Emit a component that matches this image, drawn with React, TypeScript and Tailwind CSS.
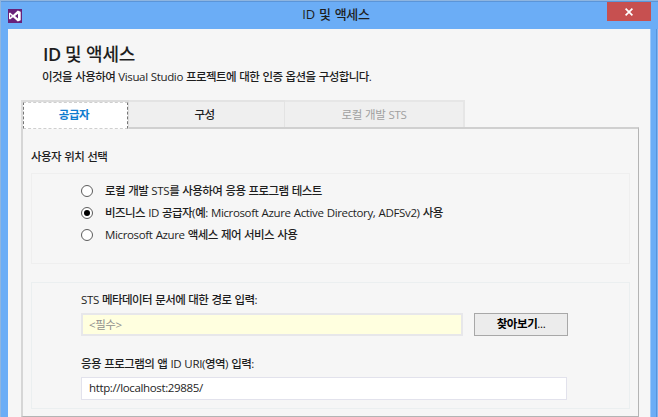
import React from "react";

const korean = /[\u3131-\uD7A3]/;

type MixedProps = { text: string; className?: string; latin?: string; hangul?: string };

// Hangul runs are set slightly heavier and tighter than the Latin runs beside them.
function Mixed({
  text,
  className = "text-[11.5px]",
  latin = "tracking-[-0.36px] [word-spacing:0.5px]",
  hangul = "font-medium tracking-[-0.58px]",
}: MixedProps) {
  const runs = text.match(/[\u3131-\uD7A3]+|[^\u3131-\uD7A3]+/g) ?? [];
  return (
    <span className={`block whitespace-pre ${className}`}>
      {runs.map((run, i) => (
        <span key={i} className={korean.test(run) ? hangul : latin}>
          {run}
        </span>
      ))}
    </span>
  );
}

function Radio({ checked = false }: { checked?: boolean }) {
  return (
    <span className="flex size-3 shrink-0 items-center justify-center rounded-full border border-[#5c5c5c] bg-white">
      {checked && <span className="size-1.5 rounded-full bg-black" />}
    </span>
  );
}

function Option({ text, checked }: { text: string; checked?: boolean }) {
  return (
    <div className="flex h-[22px] items-center gap-3">
      <Radio checked={checked} />
      <Mixed text={text} />
    </div>
  );
}

export default function App() {
  return (
    <div className="flex h-[417px] w-[658px] flex-col overflow-hidden border-t border-l border-[#8fb5df] bg-[#6badf6] font-['Open_Sans','Noto_Sans_CJK_KR',sans-serif] text-[12px] leading-[18px] text-[#1e1e1e]">
      <header className="grid h-7 shrink-0 grid-cols-[1fr_auto_1fr] border-t border-[#5b95d8]">
        <svg className="mt-[7px] ml-[7px]" width="14" height="14" viewBox="0 0 14 14">
          <path fill="#68217a" d="M0 0h14v14H0z" />
          <path fill="#fff" fillRule="evenodd" d="M1 4.2 2 3.5 5 6 9.8 1.5 12.7 2.7v8.6L9.8 12.5 5 8.3 2 10.5 1 9.8ZM2.2 5.4v3.2L3.8 7ZM10 4.7 7 7l3 2.4Z" />
        </svg>
        <Mixed
          text="ID 및 액세스"
          className="pt-[3px] pl-[13px] text-[13px]"
          latin="tracking-[-0.2px] [word-spacing:0.8px]"
          hangul="font-medium tracking-[-0.3px]"
        />
        <div className="mr-[7px] flex h-[19px] w-11 items-center justify-center justify-self-end bg-[#c75050]">
          <svg className="mt-px" width="8" height="8" viewBox="0 0 8 8" fill="none" stroke="#fff" strokeWidth="1.7">
            <path d="m.6.6 6.8 6.8M7.4.6.6 7.4" />
          </svg>
        </div>
      </header>
      <div className="flex min-h-0 flex-1">
        <div className="ml-[7px] flex w-[642px] flex-col bg-[#f6f6f6] pl-[13px]">
          <h1 className="mt-[12px] ml-[22px] leading-[26px] font-semibold">
            <Mixed
              text="ID 및 액세스"
              className="text-[18px]"
              latin="tracking-[-0.6px] [word-spacing:0.5px]"
              hangul="font-medium tracking-[-0.2px]"
            />
          </h1>
          <Mixed
            text="이것을 사용하여 Visual Studio 프로젝트에 대한 인증 옵션을 구성합니다."
            className="mt-px ml-[21px] text-[11.5px]"
          />
          <nav className="mt-[14px] flex h-7 shrink-0 items-stretch border-l border-[#dcdcdc]">
            <div className="relative -mb-px flex w-[107px] border-t-2 border-r border-l border-[#dcdcdc] bg-white">
              <div className="flex flex-1 items-center justify-center border border-dashed border-x-[#777] border-y-[#cfcfcf] pr-[3px] pb-[2px] text-[#0e7ccf]">
                <Mixed text="공급자" hangul="font-bold tracking-[-0.4px]" />
              </div>
            </div>
            <div className="flex w-[156px] items-center justify-center border-t-2 border-r border-[#e3e3e3] bg-[#efefef] pr-[4px] pb-px">
              <Mixed text="구성" />
            </div>
            <div className="flex w-[180px] items-center justify-center border-t-2 border-r-2 border-[#e6e6e6] bg-[#efefef] pb-px text-[#a0a0a0]">
              <Mixed text="로컬 개발 STS" hangul="tracking-[-0.43px]" />
            </div>
          </nav>
          <main className="-mt-px flex h-[290px] w-[618px] flex-col border-t-2 border-r border-b border-l-2 border-t-[#d0d0d0] border-r-[#b4b4b4] border-b-[#b4b4b4] border-l-[#d6d6d6] pl-2">
            <Mixed text="사용자 위치 선택" className="mt-[19px] text-[11.5px]" />
            <section className="mt-[7px] flex h-[91px] w-[599px] flex-col border border-[#efefef] pt-[6px] pl-[49px]">
              <Option text="로컬 개발 STS를 사용하여 응용 프로그램 테스트" />
              <Option text="비즈니스 ID 공급자(예: Microsoft Azure Active Directory, ADFSv2) 사용" checked />
              <Option text="Microsoft Azure 액세스 제어 서비스 사용" />
            </section>
            <section className="mt-[18px] flex h-[127px] w-[599px] flex-col border border-[#ebeff0] pl-[49px]">
              <Mixed text="STS 메타데이터 문서에 대한 경로 입력:" className="mt-2 text-[11.5px]" />
              <div className="mt-1 flex items-center gap-[11px]">
                <div className="flex h-[23px] w-[382px] items-center border-2 border-[#e7e7ea] bg-[#ffffdf] pl-[6px] text-[#8f8f8c]">
                  <Mixed text="<필수>" hangul="tracking-[-0.43px]" />
                </div>
                <button className="flex h-[23px] w-[94px] items-center justify-center border border-[#a8a8a8] bg-[#ececec] pb-px text-black">
                  <Mixed text="찾아보기..." hangul="font-bold tracking-[-0.43px]" />
                </button>
              </div>
              <Mixed text="응용 프로그램의 앱 ID URI(영역) 입력:" className="mt-[19px] text-[11.5px]" />
              <div className="mt-1 flex h-[23px] w-[486px] items-center border border-[#e2e2ec] bg-white pb-px pl-[7px]">
                <Mixed text="http://localhost:29885/" />
              </div>
            </section>
          </main>
        </div>
        <div className="flex-1 border-l border-[#9cc8f8]" />
        <div className="w-px bg-[#5794dc]" />
        <div className="w-px bg-[#83b6ee]" />
      </div>
    </div>
  );
}
